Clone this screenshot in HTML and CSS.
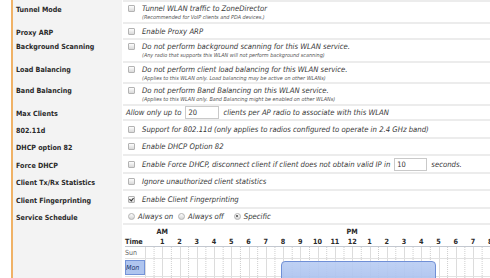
FILE: index.html
```html
<!DOCTYPE html>
<html>
<head>
<meta charset="utf-8">
<link rel="stylesheet" href="styles.css">
</head>
<body>
<div class="page">
  <div class="form">
    <div class="lbl top first-lbl">Tunnel Mode</div>
    <div class="val dbl first">
      <div class="line"><span class="cb"></span><span class="txt">Tunnel WLAN traffic to ZoneDirector</span></div>
      <div class="sub">(Recommended for VoIP clients and PDA devices.)</div>
    </div>

    <div class="lbl">Proxy ARP</div>
    <div class="val"><span class="cb"></span><span class="txt">Enable Proxy ARP</span></div>

    <div class="lbl top">Background Scanning</div>
    <div class="val dbl">
      <div class="line"><span class="cb"></span><span class="txt">Do not perform background scanning for this WLAN service.</span></div>
      <div class="sub">(Any radio that supports this WLAN will not perform background scanning)</div>
    </div>

    <div class="lbl top">Load Balancing</div>
    <div class="val dbl">
      <div class="line"><span class="cb"></span><span class="txt">Do not perform client load balancing for this WLAN service.</span></div>
      <div class="sub">(Applies to this WLAN only. Load balancing may be active on other WLANs)</div>
    </div>

    <div class="lbl top">Band Balancing</div>
    <div class="val dbl">
      <div class="line"><span class="cb"></span><span class="txt">Do not perform Band Balancing on this WLAN service.</span></div>
      <div class="sub">(Applies to this WLAN only. Band Balancing might be enabled on other WLANs)</div>
    </div>

    <div class="lbl">Max Clients</div>
    <div class="val plain"><span class="txt">Allow only up to</span><span class="inp w20">20</span><span class="txt">clients per AP radio to associate with this WLAN</span></div>

    <div class="lbl">802.11d</div>
    <div class="val"><span class="cb"></span><span class="txt">Support for 802.11d (only applies to radios configured to operate in 2.4 GHz band)</span></div>

    <div class="lbl">DHCP option 82</div>
    <div class="val"><span class="cb"></span><span class="txt">Enable DHCP Option 82</span></div>

    <div class="lbl">Force DHCP</div>
    <div class="val"><span class="cb"></span><span class="txt">Enable Force DHCP, disconnect client if client does not obtain valid IP in</span><span class="inp w10">10</span><span class="txt">seconds.</span></div>

    <div class="lbl">Client Tx/Rx Statistics</div>
    <div class="val"><span class="cb"></span><span class="txt">Ignore unauthorized client statistics</span></div>

    <div class="lbl">Client Fingerprinting</div>
    <div class="val"><span class="cb checked"></span><span class="txt">Enable Client Fingerprinting</span></div>

    <div class="lbl">Service Schedule</div>
    <div class="val radios">
      <span class="rad r1"></span><span class="txt">Always on</span>
      <span class="rad r2"></span><span class="txt">Always off</span>
      <span class="rad r3 on"></span><span class="txt">Specific</span>
    </div>

    <div class="lbl"></div>
    <div class="sched">
      <div class="hrow ampm"><span class="am">AM</span><span class="pm">PM</span></div>
      <div class="hrow hours">
        <span class="time">Time</span>
        <span>1</span><span>2</span><span>3</span><span>4</span><span>5</span><span>6</span>
        <span>7</span><span>8</span><span>9</span><span>10</span><span>11</span><span>12</span>
        <span>1</span><span>2</span><span>3</span><span>4</span><span>5</span><span>6</span>
        <span>7</span><span>8</span>
      </div>
      <div class="day"><span class="dname">Sun</span><span class="track"></span></div>
      <div class="day sel tall"><span class="dname">Mon</span><span class="track"></span></div>
      <div class="day sel tall"><span class="dname">Tue</span><span class="track"></span></div>
      <div class="bar"></div>
    </div>
  </div>
</div>
</body>
</html>
```
FILE: styles.css
```css
html, body {
  margin: 0;
  padding: 0;
  background: #fff;
  overflow: hidden;
}
body {
  font-family: "DejaVu Sans Condensed", "DejaVu Sans", sans-serif;
  color: #333;
}
.page {
  padding-left: 11px;
  height: 278px;
  overflow: hidden;
}
.form {
  display: grid;
  grid-template-columns: 109px 1fr;
  column-gap: 1px;
  grid-template-rows: 24px 16px 23px 21px 22px 15px 18px 17px 18px 17px 18px 16px 60px;
  border-left: 2px solid #f0b266;
}
.lbl {
  background: #f3f3f3;
  font-weight: bold;
  font-size: 7.1px;
  color: #2a2a2a;
  padding-left: 3px;
  display: flex;
  align-items: center;
  white-space: nowrap;
}
.lbl.top {
  align-items: flex-start;
  padding-top: 2px;
  line-height: 10px;
}
.lbl.top.first-lbl {
  padding-top: 5px;
}
.val {
  box-sizing: border-box;
  border-bottom: 2px solid #ececec;
  display: flex;
  align-items: center;
  white-space: nowrap;
  font-size: 7.7px;
  font-style: italic;
  color: #383838;
  overflow: hidden;
}
.val.first {
  border-top: 2px solid #ececec;
}
.val.dbl {
  flex-direction: column;
  align-items: flex-start;
  justify-content: flex-start;
  padding-top: 1px;
}
.line {
  display: flex;
  align-items: center;
  height: 10px;
}
.sub {
  font-size: 5.45px;
  line-height: 8px;
  color: #555;
  padding-left: 19px;
}
.cb {
  box-sizing: border-box;
  width: 7px;
  height: 7px;
  border: 1px solid #b3b3b3;
  border-radius: 1px;
  background: linear-gradient(#fdfdfd, #d9d9d9);
  margin: 0 7px 0 5px;
  flex: none;
  position: relative;
}
.cb.checked::after {
  content: "";
  position: absolute;
  left: 1px;
  top: 0;
  width: 2px;
  height: 3px;
  border-right: 1px solid #333;
  border-bottom: 1px solid #333;
  transform: rotate(40deg);
}
.plain {
  padding-left: 3px;
}
.inp {
  box-sizing: border-box;
  height: 13px;
  border: 1px solid #c9c9c9;
  font-style: normal;
  font-size: 7.5px;
  color: #333;
  padding-left: 2px;
  display: flex;
  align-items: center;
  margin: 0 4px;
  flex: none;
}
.w20 { width: 34px; }
.w10 { width: 33px; margin-left: 4px; }
.radios .rad {
  box-sizing: border-box;
  width: 7px;
  height: 7px;
  border: 1px solid #b3b3b3;
  border-radius: 50%;
  background: linear-gradient(#fdfdfd, #d5d5d5);
  margin: 0 3px 0 5px;
  flex: none;
  position: relative;
}
.radios .r1 { margin-left: 5px; }
.radios .r2 { margin-left: 5px; }
.radios .r3 { margin-left: 10px; }
.rad.on::after {
  content: "";
  position: absolute;
  left: 1.5px;
  top: 1.5px;
  width: 2px;
  height: 2px;
  border-radius: 50%;
  background: #444;
}
.sched {
  position: relative;
  padding-left: 2px;
  overflow: hidden;
}
.hrow {
  display: grid;
  grid-template-columns: 28.6px repeat(23, 17.27px);
  height: 9px;
  line-height: 9px;
  font-weight: bold;
  font-size: 7.2px;
  color: #2a2a2a;
  text-align: center;
  white-space: nowrap;
}
.hrow.ampm { margin-top: 2px; height: 10px; line-height: 10px; }
.am { grid-column: 2; }
.pm { grid-column: 13; }
.hours {
  border-bottom: 1px solid #c3c8d0;
}
.hours .time { text-align: left; }
.day {
  display: flex;
  height: 11px;
  border-bottom: 1px solid #e2e2e2;
}
.day.tall { height: 17px; }
.dname {
  box-sizing: border-box;
  width: 20px;
  flex: none;
  font-size: 7px;
  color: #666;
  display: flex;
  align-items: center;
}
.day.sel .dname {
  background: #afc5ef;
  border: 1px solid #7393d8;
  color: #23356e;
  font-style: italic;
  margin: 1px 0;
}
.track {
  flex: 1;
  background-image:
    repeating-linear-gradient(to right, #dcdcdc 0 1px, transparent 1px 17.27px),
    conic-gradient(at 1px 1px, transparent 270deg, #cccccc 270deg);
  background-size: auto, 17.27px 2px;
  background-position: 0 0, 8.6px 0;
}
.bar {
  position: absolute;
  left: 158px;
  top: 36px;
  width: 155px;
  height: 60px;
  box-sizing: border-box;
  border: 1px solid #6f8fd6;
  border-radius: 4px;
  background: linear-gradient(rgba(185, 205, 243, 0.92), rgba(140, 168, 228, 0.92));
}
```
